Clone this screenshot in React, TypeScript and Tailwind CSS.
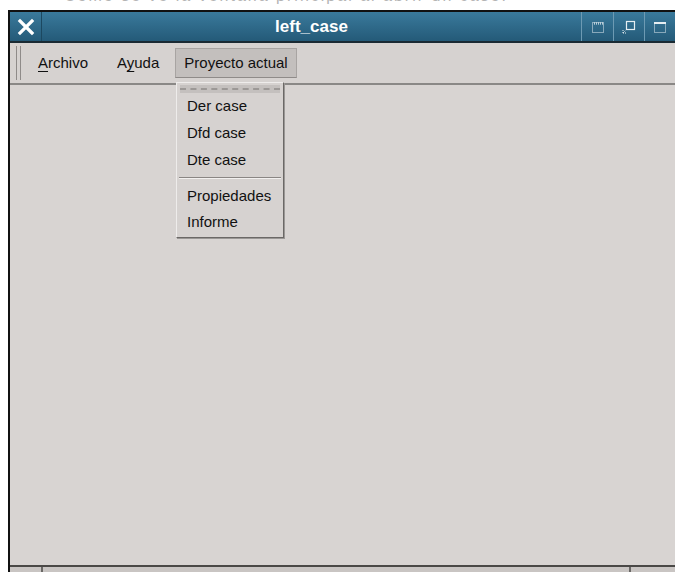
import React from "react";

const font = { fontFamily: '"Liberation Sans", Arial, sans-serif' };

function CloseIcon() {
  return (
    <svg width="18" height="18" viewBox="0 0 18 18">
      <path d="M3 3 L15 15 M15 3 L3 15" stroke="#ffffff" strokeWidth="3.2" strokeLinecap="square" />
    </svg>
  );
}

function IconMin() {
  return (
    <svg width="16" height="16" viewBox="0 0 16 16">
      <rect x="2.5" y="3.5" width="11" height="10" fill="none" stroke="#e6eef2" strokeDasharray="1 1" />
      <path d="M4 4 H13 M4 5 H13" stroke="#e6eef2" strokeDasharray="1 1" />
    </svg>
  );
}

function IconRestore() {
  return (
    <svg width="16" height="16" viewBox="0 0 16 16">
      <rect x="5.5" y="2.5" width="8" height="8" fill="none" stroke="#e6eef2" strokeWidth="1.2" />
      <path d="M2 14 L6 10 M2 14 H6 M2 14 V10" stroke="#e6eef2" strokeDasharray="1 1" fill="none" />
    </svg>
  );
}

function IconMax() {
  return (
    <svg width="16" height="16" viewBox="0 0 16 16">
      <rect x="2.5" y="3.5" width="11" height="10" fill="none" stroke="#e6eef2" strokeDasharray="1 1" />
      <rect x="2" y="3" width="12" height="2" fill="#e6eef2" />
    </svg>
  );
}

function U({ children }: { children: React.ReactNode }) {
  return <span className="underline decoration-1 underline-offset-[3px]">{children}</span>;
}

const item = "pl-[10px] flex items-center text-[15px] text-[#111]";

export default function App() {
  return (
    <div className="w-[675px] h-[572px] bg-white overflow-hidden relative" style={font}>
      {/* caption text above the window, clipped by the window frame */}
      <div className="h-[10px] overflow-hidden pl-[64px]">
        <div className="-mt-[11px] text-[16px] leading-[14px] text-[#b4b4b4] whitespace-nowrap tracking-[2px]">
          Como se ve la ventana principal al abrir un caso:
        </div>
      </div>
      <div className="ml-[8px] h-[562px] flex flex-col border-l-2 border-t-2 border-[#111]">
        {/* title bar */}
        <div className="h-[31px] flex bg-gradient-to-b from-[#3a7a9c] to-[#245a78] border-b-2 border-[#1a2a33]">
          <div className="w-[32px] flex items-center justify-center border-r border-[#1c4860]">
            <CloseIcon />
          </div>
          <div className="flex-1 flex items-center justify-center text-white font-bold text-[17px]">
            left_case
          </div>
          <div className="w-[32px] flex items-center justify-center border-l border-[#6d9ab3]">
            <IconMin />
          </div>
          <div className="w-[31px] flex items-center justify-center border-l border-[#6d9ab3]">
            <IconRestore />
          </div>
          <div className="w-[31px] flex items-center justify-center border-l border-[#6d9ab3]">
            <IconMax />
          </div>
        </div>
        {/* menu bar */}
        <div className="h-[42px] bg-[#d6d2d0] flex items-center border-b-2 border-[#8a8886] relative">
          <div className="ml-[6px] h-[34px] w-[5px] border-l border-r border-[#8f8b89] mr-[17px]" />
          <div className="text-[15px] text-[#111] mr-[29px]">
            <U>A</U>rchivo
          </div>
          <div className="text-[15px] text-[#111] mr-[16px]">
            A<U>y</U>uda
          </div>
          <div className="h-[30px] px-[8px] flex items-center bg-[#c3bfbd] border border-[#a8a4a2] border-b-[#8f8b89] text-[15px] text-[#111]">
            Proyecto actual
          </div>
          {/* open dropdown */}
          <div className="absolute left-[166px] top-[39px] w-[108px] bg-[#d6d2d0] border border-[#eeeceb] border-r-[#6b6866] border-b-[#6b6866] z-10 shadow-[1px_1px_0_#9a9795] pb-[2px]">
            <div className="h-[8px] mx-[3px] mt-[2px] bg-[#c4c0be] flex items-center">
              <div className="w-full border-t-2 border-dashed border-[#9c9896]" />
            </div>
            <div className={`${item} h-[27px]`}>Der case</div>
            <div className={`${item} h-[27px]`}>Dfd case</div>
            <div className={`${item} h-[27px]`}>Dte case</div>
            <div className="mx-[2px] mt-[3px] mb-[4px] border-t border-[#8a8684] border-b border-b-[#f2f0ef]" />
            <div className={`${item} h-[26px]`}>Propiedades</div>
            <div className={`${item} h-[26px]`}>Informe</div>
          </div>
        </div>
        {/* client area */}
        <div className="flex-1 bg-[#d8d4d2]" />
        {/* bottom frame */}
        <div className="h-[7px] border-t-2 border-[#4a4846] bg-[#c9c5c3] flex">
          <div className="w-[33px] border-r-2 border-[#6a6866]" />
          <div className="flex-1 border-r-2 border-[#6a6866]" />
          <div className="w-[44px]" />
        </div>
      </div>
    </div>
  );
}
